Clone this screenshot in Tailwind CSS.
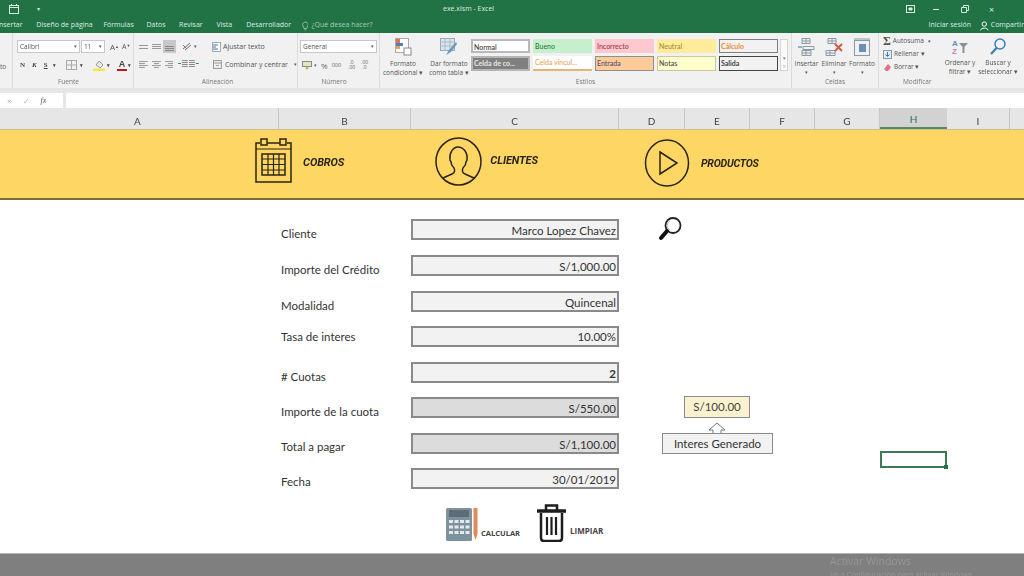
<!DOCTYPE html>
<html lang="es"><head><meta charset="utf-8"><script src="https://cdn.jsdelivr.net/npm/@tailwindcss/browser@4"></script></head>
<body class="m-0 overflow-hidden bg-white">
<div class="w-[1024px] h-[576px] overflow-hidden flex flex-col relative font-['Open_Sans',sans-serif] blur-[0.35px]">

<!-- Title bar and tabs -->
<header class="h-[33px] shrink-0 bg-[#217346] text-[#dcebe2] text-[7px] flex flex-col">
  <div class="h-[18px] flex items-center relative">
    <svg class="ml-[9px]" width="10" height="10" viewBox="0 0 10 10" fill="none" stroke="#dcebe2"><rect x="0.5" y="1.5" width="9" height="8"/><path d="M2.5 0v2M7.5 0v2M0.5 3.5h9"/></svg>
    <span class="ml-[18px] text-[6px] leading-none">▾</span>
    <span class="ml-[403px]">exe.xlsm - Excel</span>
    <svg class="ml-[412px]" width="9" height="8" viewBox="0 0 9 8" fill="none" stroke="#dcebe2"><rect x="0.5" y="0.5" width="8" height="7"/><path d="M3 3h3v2H3z" fill="#dcebe2"/></svg>
    <span class="ml-[18px] w-[6px] h-px bg-[#dcebe2]"></span>
    <svg class="ml-[22px]" width="8" height="8" viewBox="0 0 8 8" fill="none" stroke="#dcebe2"><path d="M0.5 2.5h5v5h-5zM2.5 2.5v-2h5v5h-2"/></svg>
    <span class="ml-[20px] text-[9px] leading-none">×</span>
  </div>
  <nav class="h-[15px] flex items-center whitespace-nowrap">
    <span class="ml-[-3px] w-[41px]">Insertar</span>
    <span class="w-[70px]">Diseño de página</span>
    <span class="w-[45px]">Fórmulas</span>
    <span class="w-[34px]">Datos</span>
    <span class="w-[39px]">Revisar</span>
    <span class="w-[31px]">Vista</span>
    <span class="w-[58px]">Desarrollador</span>
    <svg width="7" height="10" viewBox="0 0 7 10" fill="none" stroke="#b9d3c3" stroke-width=".8"><path d="M1.5 6C0 4 .5 1 3.500 1S7 4 5.500 6L5 7.500H2zM2.500 9h2"/></svg>
    <span class="ml-[3px] text-[#a9c9b5]">¿Qué desea hacer?</span>
    <span class="ml-[556px]">Iniciar sesión</span>
    <svg class="ml-[9px]" width="9" height="10" viewBox="0 0 9 10" fill="none" stroke="#fff"><circle cx="4.500" cy="3" r="2.300"/><path d="M.5 9.500c.5-3 7.500-3 8 0"/></svg>
    <span class="ml-[2px]">Compartir</span>
  </nav>
</header>

<!-- Ribbon -->
<section class="h-[55px] shrink-0 bg-[#f1f1f1] flex text-[#555] text-[7px] leading-[9px] whitespace-nowrap">
  <div class="w-[13px] border-r border-[#dcdcdc] flex items-end pb-[17px] text-[6.5px]">to</div>

  <!-- Fuente -->
  <div class="w-[121px] border-r border-[#dcdcdc] flex flex-col pt-[7px] relative">
    <div class="flex items-center h-[13px] pl-[4px]">
      <span class="w-[63px] h-[13px] bg-white border border-[#c8c8c8] pl-[2px] flex justify-between pr-[2px] items-center text-[6.500px]">Calibri<i class="not-italic text-[5px]">▾</i></span>
      <span class="ml-px w-[24px] h-[13px] bg-white border border-[#c8c8c8] pl-[2px] flex justify-between pr-[2px] items-center text-[6.500px]">11<i class="not-italic text-[5px]">▾</i></span>
      <span class="ml-[5px] text-[8px]">A<sup class="text-[4px]">▲</sup></span>
      <span class="ml-[3px] text-[7px]">A<sup class="text-[4px]">▼</sup></span>
    </div>
    <div class="flex items-center h-[14px] mt-[5px] pl-[7px] gap-[7px] text-[7px] font-['Liberation_Serif',serif] font-bold text-[#444]">
      <span>N</span><span class="italic">K</span><span class="underline">S</span><span class="text-[5px] ml-[-2px]">▾</span>
      <svg class="ml-[3px]" width="11" height="10" viewBox="0 0 11 10" fill="none" stroke="#aaa"><rect x=".5" y=".5" width="10" height="9"/><path d="M5.500 0v10M0 5h11"/></svg>
      <span class="text-[5px] ml-[-4px]">▾</span>
      <svg class="ml-[3px]" width="12" height="11" viewBox="0 0 12 11"><path d="M6 1l4 4-3 3-4-3z" fill="#e8e8e8" stroke="#777" stroke-width=".7"/><rect y="8.500" width="12" height="2.500" fill="#f6e64a"/></svg>
      <span class="text-[5px] ml-[-5px]">▾</span>
      <span class="relative font-['Liberation_Sans',sans-serif] text-[9px] text-[#444] border-b-2 border-[#c3161c] leading-[9px] px-[2px]">A</span>
      <span class="text-[5px] ml-[-6px]">▾</span>
    </div>
    <span class="mt-auto mb-[2px] text-center text-[6.500px] text-[#777] pr-[9px]">Fuente</span>
  </div>

  <!-- Alineación -->
  <div class="w-[164px] border-r border-[#dcdcdc] flex flex-col pt-[6px]">
    <div class="flex items-center h-[15px] pl-[5px]">
      <svg width="9" height="7" viewBox="0 0 9 7" stroke="#999"><path d="M0 .5h9M0 3.500h9M0 6.500h9" transform="translate(0 -1)"/></svg>
      <svg class="ml-[4px]" width="9" height="7" viewBox="0 0 9 7" stroke="#999"><path d="M0 1.500h9M0 3.500h9M0 5.500h9"/></svg>
      <span class="ml-[2px] w-[13px] h-[13px] bg-[#c8c8c8] flex items-end justify-center pb-[2px]"><svg width="9" height="5" viewBox="0 0 9 5" stroke="#888"><path d="M0 .5h9M0 2.500h9M0 4.500h9"/></svg></span>
      <svg class="ml-[6px]" width="10" height="9" viewBox="0 0 10 9" fill="none" stroke="#777"><path d="M1 7l7-6M3 8l6-5M1 3l4 4"/></svg>
      <span class="text-[5px] ml-[2px]">▾</span>
      <svg class="ml-[15px]" width="9" height="10" viewBox="0 0 9 10"><rect x=".5" y=".5" width="8" height="9" fill="#fff" stroke="#a8a8a8"/><path d="M1 3h5M1 5h3M1 7h5" stroke="#3a78b8"/></svg>
      <span class="ml-[2px] text-[#555]">Ajustar texto</span>
    </div>
    <div class="flex items-center h-[14px] mt-[3px] pl-[5px]">
      <svg width="9" height="7" viewBox="0 0 9 7" stroke="#999"><path d="M0 .5h9M0 2.500h6M0 4.500h9M0 6.500h6"/></svg>
      <svg class="ml-[4px]" width="9" height="7" viewBox="0 0 9 7" stroke="#999"><path d="M0 .5h9M2 2.500h5M0 4.500h9M2 6.500h5"/></svg>
      <svg class="ml-[4px]" width="9" height="7" viewBox="0 0 9 7" stroke="#999"><path d="M0 .5h9M3 2.500h6M0 4.500h9M3 6.500h6"/></svg>
      <svg class="ml-[5px]" width="10" height="8" viewBox="0 0 10 8" stroke="#888"><path d="M4 .5h6M4 2.500h6M4 4.500h6M4 6.500h6" /><path d="M0 3.500h3" stroke="#2f78b7"/></svg>
      <svg class="ml-[1px]" width="10" height="8" viewBox="0 0 10 8" stroke="#888"><path d="M0 .5h6M0 2.500h6M0 4.500h6M0 6.500h6" /><path d="M7 3.500h3" stroke="#2f78b7"/></svg>
      <svg class="ml-[14px]" width="9" height="9" viewBox="0 0 9 9" fill="none" stroke="#999"><rect x=".5" y=".5" width="8" height="8"/><path d="M0 3h9M3 5.500h3" /></svg>
      <span class="ml-[3px]">Combinar y centrar</span>
      <span class="ml-[6px] text-[5px]">▾</span>
    </div>
    <span class="mt-auto mb-[2px] text-center text-[6.500px] text-[#777] pl-[4px]">Alineación</span>
  </div>

  <!-- Número -->
  <div class="w-[82px] border-r border-[#dcdcdc] flex flex-col pt-[7px]">
    <span class="ml-[2px] w-[77px] h-[13px] bg-white border border-[#c8c8c8] px-[2px] flex justify-between items-center text-[6.500px]">General<i class="not-italic text-[5px]">▾</i></span>
    <div class="flex items-center h-[14px] mt-[5px] pl-[4px] text-[#666]">
      <svg width="10" height="9" viewBox="0 0 10 9"><rect x=".5" y=".5" width="9" height="5" fill="#dbe7c7" stroke="#8a8a8a"/><circle cx="5" cy="7" r="1.500" fill="#d6b44c"/></svg>
      <span class="ml-[2px] text-[5px]">▾</span>
      <span class="ml-[4px] text-[8px]">%</span>
      <span class="ml-[4px] text-[5.500px]">000</span>
      <span class="ml-[7px] text-[5px] leading-[5px] text-center">.0<br>.00</span>
      <span class="ml-[6px] text-[5px] leading-[5px] text-center">.00<br>.0</span>
    </div>
    <span class="mt-auto mb-[2px] text-center text-[6.500px] text-[#777] pr-[9px]">Número</span>
  </div>

  <!-- Estilos -->
  <div class="w-[412px] border-r border-[#dcdcdc] flex flex-col">
    <div class="flex pt-[5px] h-[44px]">
      <div class="w-[48px] flex flex-col items-center text-[6.500px] pr-[2px] leading-[9px]">
        <svg width="17" height="18" viewBox="0 0 17 18"><rect x=".5" y=".5" width="13" height="14" fill="#fff" stroke="#aaa"/><path d="M1 1h4v4H1z" fill="#e3705c"/><path d="M1 5h7v3H1z" fill="#4c80c0"/><path d="M1 8h4v3H1z" fill="#e0a25c"/><rect x="9" y="10" width="7" height="7" fill="#fff" stroke="#888"/></svg>
        <span class="mt-[3px]">Formato</span>
        <span>condicional ▾</span>
      </div>
      <div class="w-[42px] flex flex-col items-center text-[6.500px] leading-[9px]">
        <svg width="18" height="18" viewBox="0 0 18 18"><rect x=".5" y=".5" width="14" height="12" fill="#dbe5ee" stroke="#9aa9b5"/><path d="M0 4h15M0 8h15M5 0v13M10 0v13" stroke="#a9b9c5"/><path d="M16 4L9 12l-3 5 5-3 6-8z" fill="#6f97b5"/></svg>
        <span class="mt-[3px]">Dar formato</span>
        <span>como tabla ▾</span>
      </div>
      <div class="ml-[1px] grid grid-cols-[59px_59px_59px_59px_59px] grid-rows-[14px_15px] gap-x-[3px] gap-y-[3px] pt-[1px] text-[7px] leading-[12px] font-['Lato',sans-serif] font-medium">
        <span class="border-2 border-[#b9b9b9] bg-white text-[#333] pl-[1px]">Normal</span>
        <span class="bg-[#c6efce] text-[#2f7d32] pl-[2px] leading-[14px]">Bueno</span>
        <span class="bg-[#ffc7ce] text-[#9c3a46] pl-[2px] leading-[14px]">Incorrecto</span>
        <span class="bg-[#ffeb9c] text-[#a98a2c] pl-[2px] leading-[14px]">Neutral</span>
        <span class="border border-[#7f7f7f] bg-[#f2f2f2] text-[#e98a2a] font-bold pl-[1px]">Cálculo</span>
        <span class="border-2 border-[#b5b5b5] bg-[#808080] text-[#e8e8e8] font-bold pl-[1px] leading-[11px]">Celda de co...</span>
        <span class="bg-white border-b-2 border-[#e6b476] text-[#e4a55c] pl-[2px] leading-[13px]">Celda vincul...</span>
        <span class="border border-[#8f8f8f] bg-[#ffcc99] text-[#4f4f6f] pl-[1px]">Entrada</span>
        <span class="border border-[#c9c9a0] bg-[#ffffcc] text-[#444] pl-[1px]">Notas</span>
        <span class="border border-[#444] bg-[#f2f2f2] text-[#3f3f3f] font-bold pl-[1px]">Salida</span>
      </div>
      <div class="ml-[2px] w-[8px] h-[32px] mt-[1px] border border-[#d4d4d4] flex flex-col items-center justify-end text-[5px] leading-[8px] text-[#777] bg-[#fafafa]"><span>▾</span><span>▿</span></div>
    </div>
    <span class="mt-auto mb-[2px] text-center text-[6.500px] text-[#777]">Estilos</span>
  </div>

  <!-- Celdas -->
  <div class="w-[87px] border-r border-[#dcdcdc] flex flex-col">
    <div class="flex pt-[5px] pl-[1px] h-[44px] text-[6.500px] leading-[9px]">
      <div class="w-[27px] flex flex-col items-center">
        <svg width="17" height="18" viewBox="0 0 17 18" fill="none" stroke="#8a9aa5"><path d="M4 .5h8v5H4zM8 0v5M4 3h8M4 12.500h9v5H4zM8 12v5M4 15h9M5 8.500h11v3H5z"/><path d="M0 9h4" stroke="#2f78b7"/></svg>
        <span class="mt-[3px]">Insertar</span><span class="text-[5px]">▾</span>
      </div>
      <div class="w-[28px] flex flex-col items-center">
        <svg width="19" height="18" viewBox="0 0 19 18" fill="none" stroke="#8a9aa5"><path d="M3 .5h8v5H3zM7 0v5M3 3h8M1 12.500h9v5H1zM5 12v5M1 15h9"/><path d="M10 6l7 7M17 6l-7 7" stroke="#d4573f" stroke-width="1.800"/></svg>
        <span class="mt-[3px]">Eliminar</span><span class="text-[5px]">▾</span>
      </div>
      <div class="w-[28px] flex flex-col items-center">
        <svg width="17" height="18" viewBox="0 0 17 18" fill="none" stroke="#8a9aa5"><rect x=".5" y="2.500" width="15" height="15"/><path d="M0 1h16"/><rect x="5" y="6" width="7" height="8" fill="#6f8fb5" stroke="none"/></svg>
        <span class="mt-[3px]">Formato</span><span class="text-[5px]">▾</span>
      </div>
    </div>
    <span class="mt-auto mb-[2px] text-center text-[6.500px] text-[#777]">Celdas</span>
  </div>

  <!-- Modificar -->
  <div class="flex-1 flex flex-col">
    <div class="flex pt-[3px] pl-[4px] h-[44px] text-[6.500px]">
      <div class="w-[58px] flex flex-col gap-[3px] leading-[10px]">
        <span class="flex items-center gap-[2px]"><b class="font-['Liberation_Serif',serif] text-[12px] leading-[10px] text-[#555]">Σ</b>Autosuma<i class="not-italic text-[5px] ml-[2px]">▾</i></span>
        <span class="flex items-center gap-[2px]"><svg width="9" height="9" viewBox="0 0 9 9"><rect x=".5" y=".5" width="8" height="8" fill="#e4edf5" stroke="#8a9aa5"/><path d="M4.500 2v4M2.500 4.500l2 2 2-2" stroke="#2f78b7" fill="none"/></svg>Rellenar ▾</span>
        <span class="flex items-center gap-[2px]"><svg width="9" height="9" viewBox="0 0 9 9"><path d="M1 6l4-5 3 3-3 4H3z" fill="#e5708a"/></svg>Borrar ▾</span>
      </div>
      <div class="w-[38px] flex flex-col items-center leading-[9px] pt-[2px]">
        <svg width="18" height="18" viewBox="0 0 18 18"><text x="1" y="8" font-size="8" font-weight="700" fill="#5d8fc5" font-family="Liberation Sans">A</text><text x="1" y="16" font-size="8" font-weight="700" fill="#b583bd" font-family="Liberation Sans">Z</text><path d="M8 5h9l-3.500 4v6h-2V9z" fill="#8a9098"/></svg>
        <span class="mt-[2px]">Ordenar y</span><span>filtrar ▾</span>
      </div>
      <div class="w-[38px] flex flex-col items-center leading-[9px] pt-[2px]">
        <svg width="16" height="18" viewBox="0 0 16 18" fill="none" stroke="#3f7db8" stroke-width="1.500"><circle cx="10" cy="6" r="5"/><path d="M6.500 10L1 16" stroke-width="2.200"/></svg>
        <span class="mt-[2px]">Buscar y</span><span>seleccionar ▾</span>
      </div>
    </div>
    <span class="mt-auto mb-[2px] pl-[24px] text-[6.500px] text-[#777]">Modificar</span>
  </div>
</section>

<!-- Formula bar -->
<section class="h-[20px] shrink-0 bg-[#e6e6e6] flex items-end gap-[3px]">
  <div class="w-[63px] h-[15px] bg-white flex items-center text-[#aaa] text-[8px] pl-[7px] gap-[11px]"><span>×</span><span>✓</span><span class="italic font-['Liberation_Serif',serif] text-[#555]">fx</span></div>
  <div class="flex-1 h-[15px] bg-white"></div>
</section>

<!-- Column headers -->
<section class="h-[22px] shrink-0 bg-[#e6e6e6] flex text-[10px] text-[#444] font-['Lato',sans-serif] border-b border-[#c9c095]">
  <span class="w-[279px] border-r border-[#c6c6c6] flex items-center justify-center pr-[3px] pt-[5px]">A</span>
  <span class="w-[132px] border-r border-[#c6c6c6] flex items-center justify-center pt-[5px]">B</span>
  <span class="w-[208px] border-r border-[#c6c6c6] flex items-center justify-center pt-[5px]">C</span>
  <span class="w-[66px] border-r border-[#c6c6c6] flex items-center justify-center pt-[5px]">D</span>
  <span class="w-[65px] border-r border-[#c6c6c6] flex items-center justify-center pt-[5px]">E</span>
  <span class="w-[65px] border-r border-[#c6c6c6] flex items-center justify-center pt-[5px]">F</span>
  <span class="w-[65px] border-r border-[#c6c6c6] flex items-center justify-center pt-[5px]">G</span>
  <span class="w-[67px] bg-[#d2d2d2] border-b-2 border-[#5c8a5f] flex items-center justify-center pt-[3px] text-[#217346]">H</span>
  <span class="w-[63px] border-r border-[#c6c6c6] flex items-center justify-center pt-[5px]">I</span>
</section>

<!-- Yellow banner -->
<section class="h-[70px] shrink-0 bg-[#fdd663] border-b-2 border-[#7d6c32] flex items-center relative text-[#2a2416] font-['Roboto',sans-serif] font-bold italic text-[10px] tracking-[-0.1px]">
  <svg class="ml-[255px] mb-[6px]" width="37" height="46" viewBox="0 0 37 46" fill="none" stroke="#2a2416" stroke-width="1.500"><path d="M5 5H1v39h35V5h-4M12 5h13"/><rect x="6" y="1" width="6" height="6"/><rect x="25" y="1" width="6" height="6"/><path d="M1 11h35" stroke-width="1"/><rect x="7" y="16" width="23" height="21"/><path d="M13 16v21M18.500 16v21M24 16v21M7 21h23M7 26.500h23M7 32h23" stroke-width="1.200"/></svg>
  <span class="ml-[11px] mt-[-1px] text-[11px]">COBROS</span>
  <svg class="ml-[91px] mb-[6px]" width="47" height="49" viewBox="0 0 47 49" fill="none" stroke="#2a2416" stroke-width="1.500"><ellipse cx="23.500" cy="24.500" rx="22.500" ry="23.500"/><path d="M8 41l9-4c3-1 3-4 2-6-2-2-3-4-3-6l-1-2c-1-7 3-13 8-13s10 5 9 13l-1 2c0 2-1 4-3 6-1 2-1 5 2 6l9 4"/></svg>
  <span class="ml-[8px] mb-[6px] text-[11px]">CLIENTES</span>
  <svg class="ml-[106px] mb-[3px]" width="46" height="48" viewBox="0 0 46 48" fill="none" stroke="#2a2416" stroke-width="1.500"><ellipse cx="23" cy="24" rx="21.500" ry="23"/><path d="M16 13v22l17-11z"/></svg>
  <span class="ml-[11px] mt-[-1px] text-[10.500px] tracking-[-0.2px]">PRODUCTOS</span>
</section>

<!-- Worksheet -->
<main class="relative h-[353px] shrink-0 bg-white font-['Lato',sans-serif] text-[11.500px] text-[#333] pl-[281px] pt-[19px] flex flex-col">
  <div class="flex h-[21px] mb-[15px]"><span class="w-[130px] pt-[6px]">Cliente</span><span class="w-[208px] border-2 border-[#8a8a8a] bg-[#f2f2f2] text-right leading-[18px] pr-px pt-px">Marco Lopez Chavez</span></div>
  <div class="flex h-[21px] mb-[15px]"><span class="w-[130px] pt-[6px]">Importe del Crédito</span><span class="w-[208px] border-2 border-[#8a8a8a] bg-[#f2f2f2] text-right leading-[18px] pr-px pt-px">S/1,000.00</span></div>
  <div class="flex h-[21px] mb-[14px]"><span class="w-[130px] pt-[6px]">Modalidad</span><span class="w-[208px] border-2 border-[#8a8a8a] bg-[#f2f2f2] text-right leading-[18px] pr-px pt-px">Quincenal</span></div>
  <div class="flex h-[21px] mb-[15px]"><span class="w-[130px] pt-[2px]">Tasa de interes</span><span class="w-[208px] border-2 border-[#8a8a8a] bg-[#f2f2f2] text-right leading-[18px] pr-px">10.00%</span></div>
  <div class="flex h-[21px] mb-[14px]"><span class="w-[130px] pt-[6px]"># Cuotas</span><span class="w-[208px] border-2 border-[#8a8a8a] bg-[#f2f2f2] text-right leading-[18px] pr-px pt-px font-bold">2</span></div>
  <div class="flex h-[21px] mb-[15px]"><span class="w-[130px] pt-[6px]">Importe de la cuota</span><span class="w-[208px] border-2 border-[#8a8a8a] bg-[#dcdcdc] text-right leading-[18px] pr-px pt-px">S/550.00</span></div>
  <div class="flex h-[21px] mb-[14px]"><span class="w-[130px] pt-[5px]">Total a pagar</span><span class="w-[208px] border-2 border-[#8a8a8a] bg-[#dcdcdc] text-right leading-[18px] pr-px pt-px">S/1,100.00</span></div>
  <div class="flex h-[21px]"><span class="w-[130px] pt-[5px]">Fecha</span><span class="w-[208px] border-2 border-[#8a8a8a] bg-[#f2f2f2] text-right leading-[18px] pr-px pt-px">30/01/2019</span></div>

  <!-- Search icon floating on the sheet -->
  <svg class="absolute left-[658px] top-[16px]" width="25" height="25" viewBox="0 0 25 25" fill="none"><circle cx="15" cy="9.500" r="7.500" stroke="#222" stroke-width="1.800"/><path d="M12 5a5 5 0 0 0 0 9" stroke="#bbb"/><path d="M9 15L3 22" stroke="#111" stroke-width="4" stroke-linecap="round"/></svg>

  <!-- Floating shapes -->
  <div class="absolute left-[684px] top-[196px] w-[66px] h-[22px] border border-[#8a8a8a] bg-[#fdf2d0] text-center leading-[20px] text-[#444]">S/100.00</div>
  <svg class="absolute left-[708px] top-[222px]" width="18" height="12" viewBox="0 0 18 12" fill="#fff" stroke="#777"><path d="M1 8l8-7 8 7h-4v4H5V8z"/></svg>
  <div class="absolute left-[662px] top-[233px] w-[111px] h-[21px] border border-[#8a8a8a] bg-[#f2f2f2] text-center leading-[20px]">Interes Generado</div>

  <!-- Selected cell -->
  <div class="absolute left-[880px] top-[251px] w-[67px] h-[17px] border-2 border-[#3b7a57]"><span class="absolute right-[-3px] bottom-[-3px] w-[4px] h-[4px] bg-[#217346]"></span></div>

  <!-- Buttons -->
  <div class="absolute left-[446px] top-[304px] flex items-end font-['Open_Sans',sans-serif] font-bold text-[7.500px] text-[#444]">
    <svg width="32" height="34" viewBox="0 0 32 34"><rect width="26" height="33" y="1" rx="1.500" fill="#7e929e"/><rect x="3" y="3" width="20" height="7" fill="#5c6d78"/><g fill="#e3e9ec"><rect x="3" y="13" width="4" height="3"/><rect x="8.500" y="13" width="4" height="3"/><rect x="14" y="13" width="4" height="3"/><rect x="19.500" y="13" width="4" height="3"/><rect x="3" y="18.500" width="4" height="3"/><rect x="8.500" y="18.500" width="4" height="3"/><rect x="14" y="18.500" width="4" height="3"/><rect x="19.500" y="18.500" width="4" height="3"/><rect x="3" y="24" width="4" height="3"/><rect x="8.500" y="24" width="4" height="3"/><rect x="14" y="24" width="4" height="3"/><rect x="19.500" y="24" width="4" height="3"/></g><path d="M27.500 1h4v26l-2 6-2-6z" fill="#e08a5a"/></svg>
    <span class="ml-[3px] mb-[2px]">CALCULAR</span>
    <svg class="ml-[17px] mb-[-1px]" width="29" height="38" viewBox="0 0 29 38" fill="none" stroke="#1d1d1d" stroke-width="2.500"><path d="M1 7h27" stroke-width="3.500" stroke-linecap="round"/><path d="M9 6V1.500h11V6"/><path d="M4 9v25q0 3 3 3h15q3 0 3-3V9"/><path d="M10 13v18M14.500 13v18M19 13v18" stroke-width="2.200"/></svg>
    <span class="ml-[4px] mb-[4px] text-[8px]">LIMPIAR</span>
  </div>
</main>

<!-- Status area -->
<footer class="flex-1 bg-[#7f7f7f] border-t border-[#b5b5b5] pl-[830px] text-[#969696] whitespace-nowrap">
  <div class="text-[10.500px] leading-[12px] pt-px">Activar Windows</div>
  <div class="text-[7.500px] leading-[10px] pt-[2px]">Ve a Configuración para activar Windows.</div>
</footer>
</div>
</body></html>
